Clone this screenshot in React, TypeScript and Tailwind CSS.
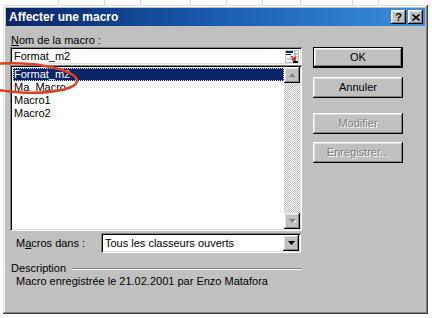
import React from 'react';

const font = { fontFamily: '"Liberation Sans", Arial, sans-serif' };

const raised =
  'shadow-[inset_-1px_-1px_#000,inset_1px_1px_#fff,inset_-2px_-2px_#808080,inset_2px_2px_#dfdfdf]';
const sunken =
  'shadow-[inset_1px_1px_#808080,inset_-1px_-1px_#fff,inset_2px_2px_#000,inset_-2px_-2px_#dfdfdf]';

function Btn({ label, def, disabled }: { label: string; def?: boolean; disabled?: boolean }) {
  const inner = (
    <div
      className={`flex items-center justify-center bg-[#c0c0c0] text-[11px] ${raised} ${
        def ? 'h-[19px] w-[88px]' : 'h-[21px] w-[90px]'
      } ${disabled ? 'text-[#808080] [text-shadow:1px_1px_0_#fff]' : 'text-black'}`}
    >
      {label}
    </div>
  );
  if (def) return <div className="border border-black w-[90px] h-[21px]">{inner}</div>;
  return inner;
}

function ArrowBtn({ up, active }: { up?: boolean; active?: boolean }) {
  return (
    <div className={`w-[16px] h-[16px] bg-[#c0c0c0] flex items-center justify-center ${raised}`}>
      <svg width="7" height="4" viewBox="0 0 7 4">
        {active ? (
          <polygon points="0,0 7,0 3.5,4" fill="#000" />
        ) : up ? (
          <>
            <polygon points="1,4 8,4 4.5,0.5" fill="#fff" />
            <polygon points="0,4 7,4 3.5,0" fill="#808080" />
          </>
        ) : (
          <>
            <polygon points="1,1 8,1 4.5,4.5" fill="#fff" />
            <polygon points="0,0 7,0 3.5,4" fill="#808080" />
          </>
        )}
      </svg>
    </div>
  );
}

export default function App() {
  const macros = ['Format_m2', 'Ma_Macro', 'Macro1', 'Macro2'];

  return (
    <div className="relative w-[432px] h-[318px] bg-white pt-[5px] pl-[3px] overflow-hidden" style={font}>
      {/* excel grid remnants */}
      <div className="absolute top-0 left-0 w-[432px] h-[5px] flex">
        {[58, 104, 140, 190, 226, 262, 300, 352, 378].map((x) => (
          <div key={x} className="absolute top-0 w-px h-[5px] bg-[#d8d8d8]" style={{ left: x }} />
        ))}
      </div>

      <div
        className={`w-[425px] h-[309px] bg-[#c0c0c0] p-[3px] flex flex-col shadow-[inset_-1px_-1px_#404040,inset_1px_1px_#dfdfdf,inset_-2px_-2px_#808080,inset_2px_2px_#fff]`}
      >
        {/* title bar */}
        <div className="h-[18px] flex items-center bg-gradient-to-r from-[#0a246a] via-[#1a5cb0] to-[#3b8fdc] pl-[3px] pr-[2px]">
          <span className="text-white font-bold text-[12px] leading-none flex-1">Affecter une macro</span>
          <div className="flex gap-[2px]">
            <div className={`w-[15px] h-[14px] bg-[#c0c0c0] flex items-center justify-center text-[11px] font-bold leading-none ${raised}`}>
              ?
            </div>
            <div className={`w-[15px] h-[14px] bg-[#c0c0c0] flex items-center justify-center ${raised}`}>
              <svg width="8" height="7" viewBox="0 0 8 7">
                <path d="M0.5 0.5 L7.5 6.5 M7.5 0.5 L0.5 6.5" stroke="#000" strokeWidth="1.6" />
              </svg>
            </div>
          </div>
        </div>

        {/* body */}
        <div className="flex pl-[4px]">
          <div className="w-[292px] flex flex-col">
            <div className="mt-[8px] h-[13px] text-[11px] leading-[13px] text-black pl-[1px]">
              <span className="underline">N</span>om de la macro :
            </div>
            <div className={`h-[18px] bg-white flex items-center pl-[4px] pr-[3px] ${sunken}`}>
              <span className="flex-1 text-[11px] leading-none text-black">Format_m2</span>
              <svg width="14" height="13" viewBox="0 0 14 13">
                <rect x="0.5" y="0.5" width="13" height="12" fill="#fff" stroke="#c0c0c0" />
                <rect x="1" y="1" width="7" height="2" fill="#0a246a" />
                <rect x="1" y="4" width="5" height="1" fill="#0a246a" />
                <path d="M9 4 h4 M9 7 h4 M2 9 h5 M10 1 v11" stroke="#909090" strokeWidth="1" />
                <path d="M6 6 L10 10 M10 7 L10 10 L7 10" stroke="#e01010" strokeWidth="1.6" fill="none" />
                <rect x="8" y="11" width="5" height="2" fill="#000" />
              </svg>
            </div>
            <div className={`h-[166px] bg-white flex p-[2px] ${sunken}`}>
              <div className="flex-1 pt-[1px] pl-[1px]">
                {macros.map((m, i) => (
                  <div
                    key={m}
                    className={`h-[13px] text-[11px] leading-[13px] pl-[1px] ${
                      i === 0
                        ? 'bg-[#0a246a] text-white outline outline-1 outline-dotted outline-[#dfdfdf] -outline-offset-1'
                        : 'text-black'
                    }`}
                  >
                    {m}
                  </div>
                ))}
              </div>
              <div className="w-[16px] flex flex-col bg-[repeating-conic-gradient(#c0c0c0_0_25%,#fff_0_50%)] bg-[length:2px_2px]">
                <ArrowBtn up />
                <div className="flex-1" />
                <ArrowBtn />
              </div>
            </div>

            <div className="mt-[2px] flex items-center">
              <div className="w-[91px] pl-[6px] text-[11px] text-black">
                M<span className="underline">a</span>cros dans :
              </div>
              <div className={`w-[200px] h-[20px] bg-white flex items-center p-[2px] ${sunken}`}>
                <span className="flex-1 pl-[2px] text-[11px] leading-none text-black">Tous les classeurs ouverts</span>
                <ArrowBtn active />
              </div>
            </div>

            <div className="mt-[9px] flex items-center h-[13px]">
              <span className="bg-[#c0c0c0] pl-[1px] pr-[6px] text-[11px] leading-[13px] text-black">
                Description
              </span>
              <div className="flex-1 h-[2px] border-t border-t-[#808080] border-b border-b-white" />
            </div>
            <div className="pl-[6px] text-[11px] leading-[13px] text-black">
              Macro enregistrée le 21.02.2001 par Enzo Matafora
            </div>
          </div>

          <div className="ml-[11px] flex flex-col pt-[21px]">
            <Btn label="OK" def />
            <div className="mt-[9px]">
              <Btn label="Annuler" />
            </div>
            <div className="mt-[15px]">
              <Btn label="Modifier" disabled />
            </div>
            <div className="mt-[8px]">
              <Btn label="Enregistrer..." disabled />
            </div>
          </div>
        </div>
      </div>

      {/* red annotation circle */}
      <svg className="absolute left-0 top-0" width="100" height="110" viewBox="0 0 100 110">
        <ellipse
          cx="22"
          cy="78"
          rx="55"
          ry="14.5"
          transform="rotate(3 22 78)"
          fill="none"
          stroke="#e0401f"
          strokeWidth="2.5"
        />
      </svg>
    </div>
  );
}
